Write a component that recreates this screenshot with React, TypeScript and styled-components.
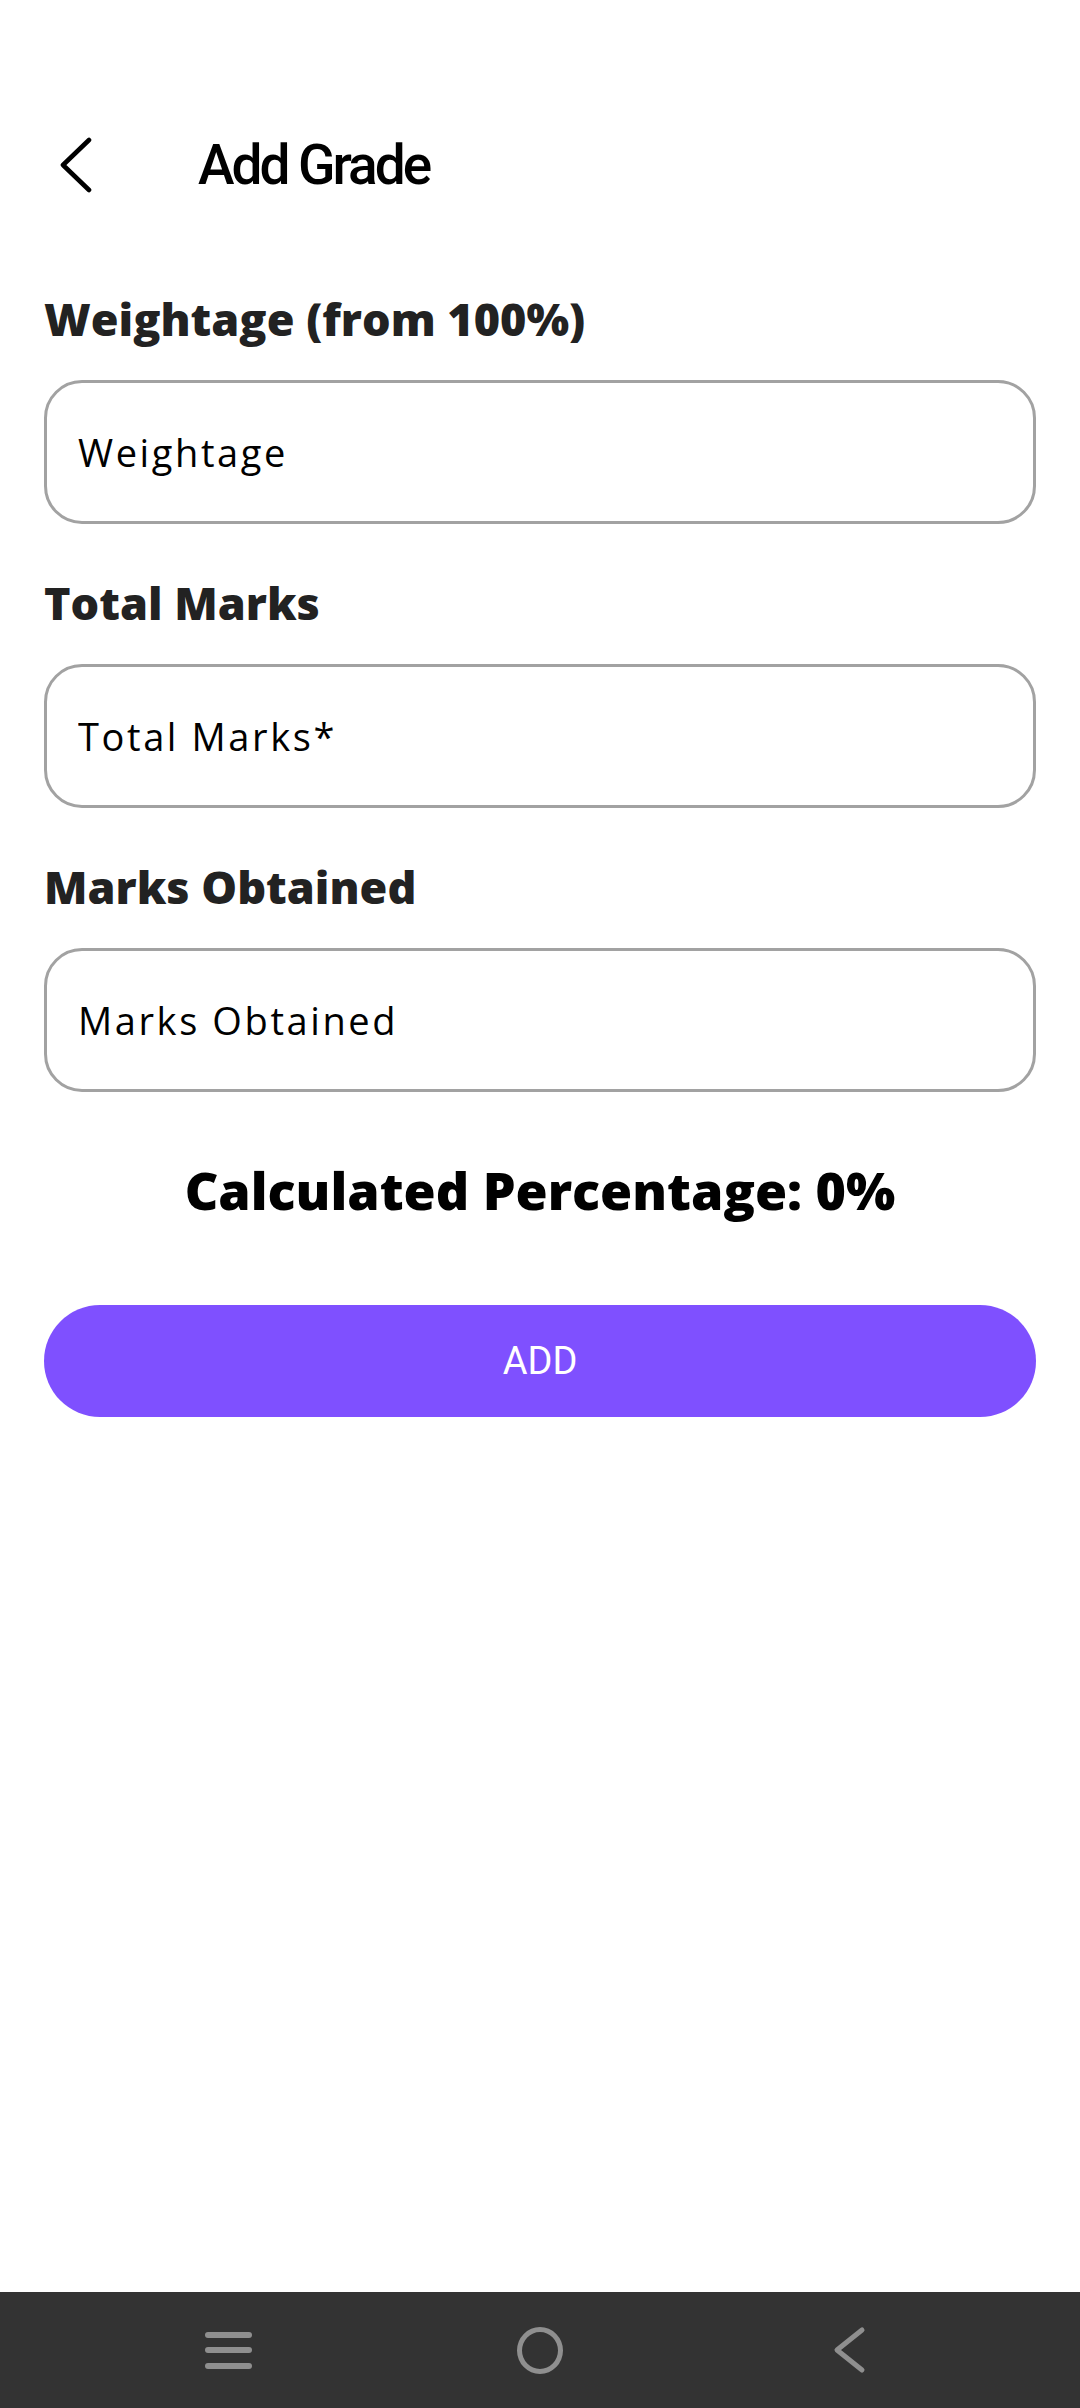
import React from "react";
import styled, { createGlobalStyle } from "styled-components";

const GlobalStyle = createGlobalStyle`
  html, body {
    margin: 0;
    padding: 0;
    background: #ffffff;
  }
  body {
    font-family: "Open Sans", "Noto Sans", sans-serif;
    -webkit-font-smoothing: antialiased;
  }
  * { box-sizing: border-box; }
`;

const Page = styled.div`
  min-height: 100vh;
  display: flex;
  flex-direction: column;
  background: #ffffff;
`;

const Header = styled.header`
  margin-top: 100px;
  height: 130px;
  display: flex;
  align-items: center;
  padding-left: 58px;
  gap: 104px;
`;

const BackButton = styled.button`
  width: 36px;
  height: 56px;
  padding: 0;
  border: none;
  background: transparent;
  display: flex;
  align-items: center;
  justify-content: center;
  cursor: pointer;
`;

const Title = styled.h1`
  margin: 0;
  font-family: Roboto, "Liberation Sans", sans-serif;
  font-weight: 500;
  font-size: 55px;
  letter-spacing: -3px;
  color: #000000;
  line-height: 64px;
`;

const Form = styled.main`
  display: flex;
  flex-direction: column;
  padding: 61px 44px 0 44px;
`;

const Fields = styled.div`
  display: flex;
  flex-direction: column;
  gap: 51px;
`;

const Field = styled.label`
  display: flex;
  flex-direction: column;
  gap: 33px;
`;

const FieldLabel = styled.span`
  font-family: "Open Sans", "Noto Sans", sans-serif;
  font-weight: 800;
  font-size: 45px;
  line-height: 56px;
  color: #222222;
`;

const TextInput = styled.input`
  height: 144px;
  width: 100%;
  border: 3px solid #a2a2a2;
  border-radius: 38px;
  padding: 0 0 0 31px;
  background: #ffffff;
  font-family: "Open Sans", "Noto Sans", sans-serif;
  font-size: 38px;
  letter-spacing: 2.6px;
  color: #000000;
  outline: none;
  &::placeholder {
    color: #000000;
    opacity: 1;
  }
`;

const Result = styled.div`
  margin-top: 66px;
  text-align: center;
  font-family: "Open Sans", "Noto Sans", sans-serif;
  font-weight: 800;
  font-size: 52px;
  line-height: 64px;
  color: #000000;
`;

const AddButton = styled.button`
  margin-top: 83px;
  height: 112px;
  width: 100%;
  border: none;
  border-radius: 56px;
  background: #7f50ff;
  color: #ffffff;
  font-family: Roboto, "Liberation Sans", sans-serif;
  font-weight: 400;
  font-size: 38px;
  letter-spacing: 0px;
  cursor: pointer;
`;

const NavBar = styled.nav`
  margin-top: auto;
  height: 116px;
  background: #333333;
  display: flex;
  align-items: center;
  justify-content: center;
  gap: 262px;
`;

const NavSlot = styled.div`
  width: 50px;
  height: 50px;
  display: flex;
  align-items: center;
  justify-content: center;
`;

const MenuLines = styled.div`
  width: 47px;
  display: flex;
  flex-direction: column;
  gap: 9.5px;
`;

const MenuLine = styled.span`
  display: block;
  height: 6px;
  border-radius: 3px;
  background: #8f8f8f;
`;

const HomeRing = styled.span`
  width: 46px;
  height: 47px;
  border-radius: 50%;
  border: 5px solid #8f8f8f;
`;

const fields = [
  { label: "Weightage (from 100%)", placeholder: "Weightage" },
  { label: "Total Marks", placeholder: "Total Marks*" },
  { label: "Marks Obtained", placeholder: "Marks Obtained" },
];

export default function App() {
  return (
    <>
      <GlobalStyle />
      <Page>
        <Header>
          <BackButton aria-label="Back">
            <svg width="36" height="56" viewBox="0 0 36 56">
              <path
                d="M31 3 L5 28 L31 53"
                fill="none"
                stroke="#000"
                strokeWidth="4.6"
                strokeLinecap="round"
                strokeLinejoin="round"
              />
            </svg>
          </BackButton>
          <Title>Add Grade</Title>
        </Header>
        <Form>
          <Fields>
            {fields.map((f) => (
              <Field key={f.label}>
                <FieldLabel>{f.label}</FieldLabel>
                <TextInput placeholder={f.placeholder} />
              </Field>
            ))}
          </Fields>
          <Result>Calculated Percentage: 0%</Result>
          <AddButton>ADD</AddButton>
        </Form>
        <NavBar>
          <NavSlot>
            <MenuLines>
              <MenuLine />
              <MenuLine />
              <MenuLine />
            </MenuLines>
          </NavSlot>
          <NavSlot>
            <HomeRing />
          </NavSlot>
          <NavSlot>
            <svg width="50" height="50" viewBox="0 0 50 50">
              <path
                d="M35 5 L10 25 L35 45"
                fill="none"
                stroke="#8f8f8f"
                strokeWidth="5"
                strokeLinecap="round"
                strokeLinejoin="round"
              />
            </svg>
          </NavSlot>
        </NavBar>
      </Page>
    </>
  );
}
